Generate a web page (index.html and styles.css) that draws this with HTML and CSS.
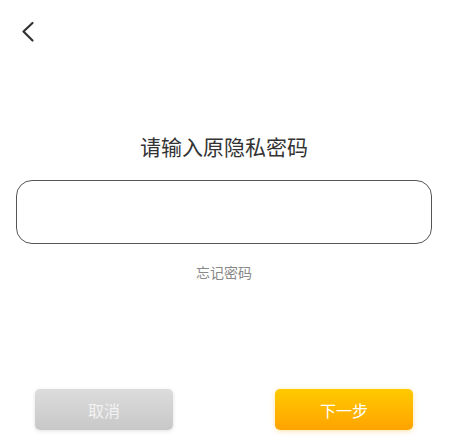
FILE: index.html
```html
<!DOCTYPE html>
<html lang="zh-CN">
<head>
<meta charset="utf-8">
<title>请输入原隐私密码</title>
<link rel="stylesheet" href="styles.css">
</head>
<body>
<div class="page">
  <header class="header">
    <svg class="back" width="16" height="24" viewBox="0 0 16 24">
      <polyline points="11.5,2 2.5,10.5 11.5,19.5" fill="none" stroke="#333" stroke-width="2.2" stroke-linecap="round" stroke-linejoin="round"/>
    </svg>
  </header>
  <div class="content">
    <h1 class="title">请输入原隐私密码</h1>
    <input class="pwd" type="password" aria-label="密码">
    <div class="forgot">忘记密码</div>
  </div>
  <div class="actions">
    <button class="btn btn-cancel">取消</button>
    <button class="btn btn-next">下一步</button>
  </div>
</div>
</body>
</html>
```
FILE: styles.css
```css
html, body {
  margin: 0;
  padding: 0;
  background: #fff;
  font-family: "Noto Sans CJK SC", "Noto Sans", sans-serif;
}
.page {
  height: 444px;
  display: flex;
  flex-direction: column;
  box-sizing: border-box;
  padding-bottom: 14px;
}
.header {
  height: 64px;
  padding: 21px 0 0 21px;
  box-sizing: border-box;
}
.back {
  display: block;
}
.content {
  margin: 0 25px 0 16px;
  display: flex;
  flex-direction: column;
  align-items: center;
}
.title {
  margin: 67px 0 0;
  font-size: 21px;
  line-height: 30px;
  font-weight: 400;
  color: #333;
  text-align: center;
}
.pwd {
  display: block;
  margin-top: 19px;
  width: 100%;
  height: 64px;
  box-sizing: border-box;
  border: 1px solid #555;
  border-radius: 16px;
  outline: none;
  background: #fff;
}
.forgot {
  margin-top: 18px;
  font-size: 14px;
  line-height: 20px;
  color: #888;
}
.actions {
  margin-top: auto;
  display: flex;
  padding-left: 35px;
  gap: 102px;
}
.btn {
  width: 138px;
  height: 41px;
  border: none;
  border-radius: 5px;
  font-family: inherit;
  font-size: 16px;
  color: #fff;
  padding: 0;
}
.btn-cancel {
  background: linear-gradient(#dcdcdc, #c8c8c8);
  color: #f2f2f2;
  box-shadow: 0 1px 4px rgba(0,0,0,0.12);
}
.btn-next {
  background: linear-gradient(#ffca00, #ffa300);
  box-shadow: 0 1px 5px rgba(255,170,0,0.35);
}
```
